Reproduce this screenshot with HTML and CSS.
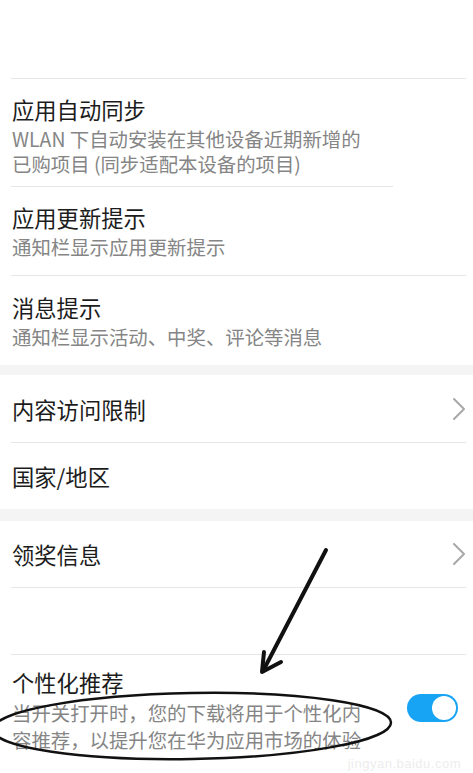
FILE: index.html
```html
<!DOCTYPE html>
<html lang="zh-CN">
<head>
<meta charset="utf-8">
<link rel="stylesheet" href="styles.css">
</head>
<body>
<div class="page">
  <div class="top"></div>

  <div class="row r1 short-line">
    <div class="text">
      <div class="title">应用自动同步</div>
      <div class="sub">WLAN 下自动安装在其他设备近期新增的已购项目 (同步适配本设备的项目)</div>
    </div>
  </div>
  <div class="row r2 line">
    <div class="text">
      <div class="title">应用更新提示</div>
      <div class="sub">通知栏显示应用更新提示</div>
    </div>
  </div>
  <div class="row r3">
    <div class="text">
      <div class="title">消息提示</div>
      <div class="sub">通知栏显示活动、中奖、评论等消息</div>
    </div>
  </div>

  <div class="gap g1"></div>

  <div class="row single r4 line">
    <div class="title">内容访问限制</div>
    <svg class="chev" width="14" height="24" viewBox="0 0 14 24"><polyline points="2,2 12,12 2,22" fill="none" stroke="#a8a8a8" stroke-width="2" stroke-linecap="round" stroke-linejoin="round"/></svg>
  </div>
  <div class="row single r5">
    <div class="title">国家/地区</div>
  </div>

  <div class="gap g2"></div>

  <div class="row single r6 line">
    <div class="title">领奖信息</div>
    <svg class="chev" width="14" height="24" viewBox="0 0 14 24"><polyline points="2,2 12,12 2,22" fill="none" stroke="#a8a8a8" stroke-width="2" stroke-linecap="round" stroke-linejoin="round"/></svg>
  </div>
  <div class="row blank line"></div>
  <div class="row r8">
    <div class="text">
      <div class="title">个性化推荐</div>
      <div class="sub">当开关打开时，您的下载将用于个性化内容推荐，以提升您在华为应用市场的体验</div>
    </div>
    <div class="toggle"><span class="knob"></span></div>
  </div>

  <svg class="annot" width="473" height="773" viewBox="0 0 473 773">
    <ellipse cx="192" cy="726" rx="199" ry="33" fill="none" stroke="#111" stroke-width="2.5" transform="rotate(-1 192 726)"/>
    <line x1="326" y1="550" x2="263" y2="671" stroke="#111" stroke-width="4" stroke-linecap="round"/>
    <polyline points="264,652 262,672 281,662" fill="none" stroke="#111" stroke-width="4" stroke-linecap="round" stroke-linejoin="round"/>
  </svg>
  <div class="watermark">jingyan.baidu.com</div>
</div>
</body>
</html>
```
FILE: styles.css
```css
html, body {
  margin: 0;
  padding: 0;
  background: #ffffff;
}
body {
  font-family: "Noto Sans CJK SC", "Noto Sans", sans-serif;
  width: 473px;
  height: 773px;
  overflow: hidden;
}
.page {
  position: relative;
  width: 473px;
  height: 773px;
  overflow: hidden;
}
.top {
  height: 78px;
  margin: 0 7px 0 11px;
  border-bottom: 1px solid #e6e6e6;
}
.row {
  display: flex;
  align-items: center;
  justify-content: space-between;
  margin: 0 7px 0 11px;
  padding-left: 1px;
}
.row.line {
  border-bottom: 1px solid #e6e6e6;
}
.row.short-line {
  margin-right: 0;
  padding-right: 7px;
  background-image: linear-gradient(#e6e6e6, #e6e6e6);
  background-size: 382px 1px;
  background-repeat: no-repeat;
  background-position: 0 100%;
}
.title {
  font-size: 22.3px;
  line-height: 30px;
  color: #1c1c1c;
}
.sub {
  margin-top: 2px;
  font-size: 19.4px;
  line-height: 26px;
  color: #858585;
  max-width: 362px;
}
.r1 { padding-top: 15px; padding-bottom: 11px; }
.r1 .sub { line-height: 25px; }
.r2 { padding: 15px 0 15px 1px; }
.r3 { padding: 16px 0 15px 1px; }
.gap {
  background: #f4f4f4;
}
.g1 { height: 10px; }
.g2 { height: 12px; }
.r4 { padding-top: 19px; padding-bottom: 18px; }
.r5 { padding-top: 18px; padding-bottom: 18px; }
.r6 { padding-top: 18px; padding-bottom: 18px; }
.chev {
  display: block;
}
.blank {
  height: 66px;
}
.r8 {
  align-items: flex-start;
  padding-top: 12px;
}
.r8 .sub {
  line-height: 27px;
}
.toggle {
  position: relative;
  flex: none;
  width: 51px;
  height: 28px;
  margin-top: 27px;
  margin-right: 8px;
  border-radius: 14px;
  background: #18a4f5;
}
.knob {
  position: absolute;
  right: 2px;
  top: 2px;
  width: 24px;
  height: 24px;
  border-radius: 50%;
  background: #ffffff;
}
.annot {
  position: absolute;
  left: 0;
  top: 0;
  pointer-events: none;
}
.watermark {
  position: absolute;
  right: 12px;
  bottom: 2px;
  font-family: "Liberation Sans", sans-serif;
  font-size: 13px;
  color: #ededed;
  letter-spacing: 0.5px;
}
```
